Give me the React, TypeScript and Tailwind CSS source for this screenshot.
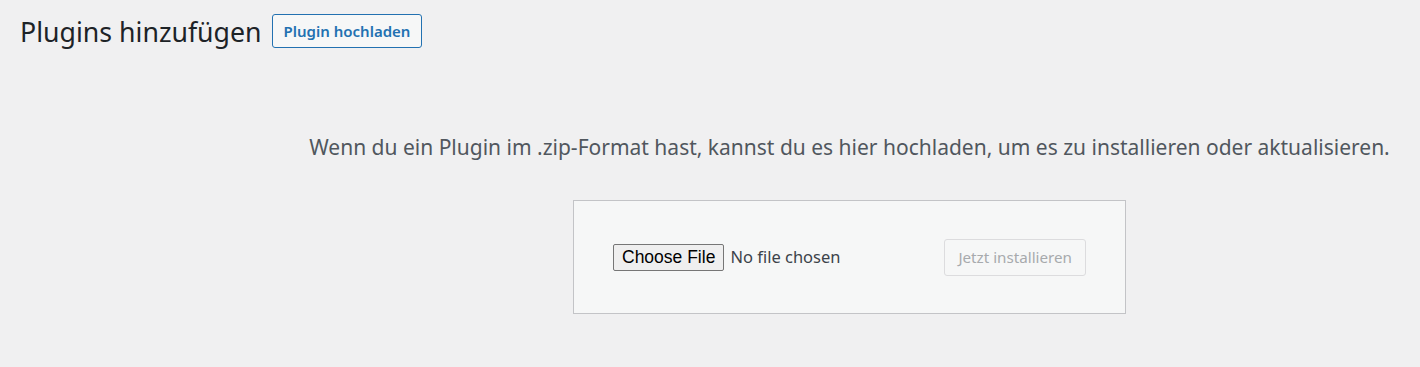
import {useState} from "react";

const font = "font-['Noto_Sans','Open_Sans',sans-serif]";

const UploadForm = () => {
    const [fileName, setFileName] = useState<string>("");

    return (
        <form className="w-[553px] h-[114px] mx-auto flex justify-between items-center bg-[#f6f7f7] border border-[#c3c4c7] px-[39px]">
            <label className="flex items-center cursor-pointer">
                <input
                    type="file"
                    accept=".zip"
                    className="hidden"
                    onChange={(e) => setFileName(e.target.files?.[0]?.name ?? "")}
                />
                <span className="h-[27px] px-[8px] flex items-center text-[17.5px] text-black bg-[#efefef] border border-[#767676] rounded-[2px] font-['Liberation_Sans',Arial,sans-serif]">
                    Choose File
                </span>
                <span className="ml-[6px] text-[16.5px] text-[#3c434a]">{fileName || "No file chosen"}</span>
            </label>
            <button
                type="button"
                disabled={!fileName}
                className="h-[37px] px-[13px] text-[15.2px] text-[#a7aaad] bg-[#f6f7f7] border border-[#dcdcde] rounded-[3px]"
            >
                Jetzt installieren
            </button>
        </form>
    );
};

const App = () => {
    return (
        <div className={`min-h-screen bg-[#f0f0f1] ${font}`}>
            <div className="flex items-center gap-[10px] pl-5 pt-[14px]">
                <h1 className="text-[26.7px] leading-[33px] text-[#1d2327]">Plugins hinzufügen</h1>
                <button className="h-[34px] px-[11px] text-[15px] font-semibold text-[#2271b1] bg-[#f6f7f7] border border-[#2271b1] rounded-[3px]">
                    Plugin hochladen
                </button>
            </div>

            <div className="pl-[279px]">
                <p className="pt-[84px] text-center text-[21px] leading-[30px] text-[#50575e]">
                    Wenn du ein Plugin im .zip-Format hast, kannst du es hier hochladen, um es zu installieren oder aktualisieren.
                </p>
                <div className="pt-[38px]">
                    <UploadForm/>
                </div>
            </div>
        </div>
    );
};

export default App;
